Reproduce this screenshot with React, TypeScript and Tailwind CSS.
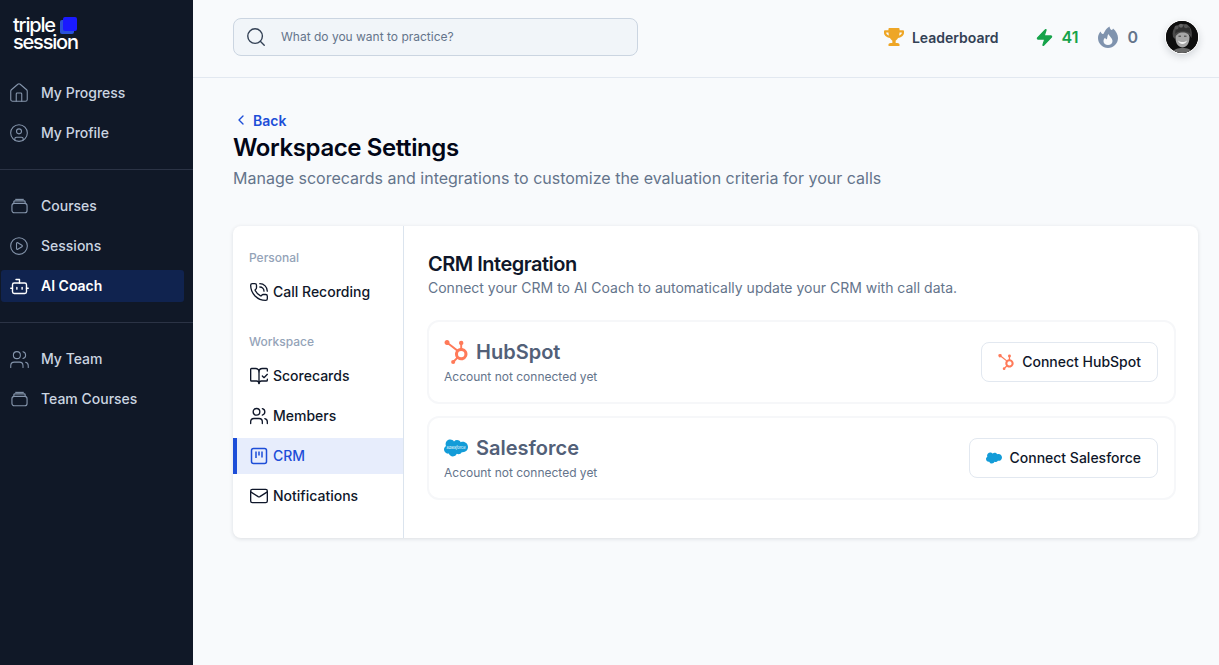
import React from "react";
import { House, CircleUser, CirclePlay, Bot, Users, Search, ChevronLeft, PhoneCall, BookOpenCheck, Mail, Zap } from "lucide-react";
import { SiHubspot, SiSalesforce } from "react-icons/si";
import { FaTrophy } from "react-icons/fa";

function CoursesIcon({ className }: { className?: string }) {
  return (
    <svg viewBox="0 0 18 16" fill="none" stroke="currentColor" strokeWidth="1.2" className={className}>
      <rect x="1" y="5.2" width="16" height="10" rx="2.5" />
      <path d="M3 5V3.4C3 2.6 3.6 2.6 4.2 2.6H13.8C14.4 2.6 15 2.6 15 3.4V5" />
      <path d="M4.5 1H13.5" />
    </svg>
  );
}

function KanbanIcon({ className }: { className?: string }) {
  return (
    <svg viewBox="0 0 18 18" fill="none" stroke="currentColor" strokeWidth="1.5" className={className}>
      <rect x="1.5" y="1.5" width="15" height="15" rx="2" />
      <path d="M6 4.5V11M9 4.5V8.5M12 4.5V10.5" />
    </svg>
  );
}

function FlameIcon({ className }: { className?: string }) {
  return (
    <svg viewBox="0 0 20 22" className={className}>
      <path
        d="M11.5 0.5C12 3.5 13.5 4.5 14.5 3.5C15 3 15 2.5 15 2.5C18 5 20 8.5 20 12C20 17.5 15.5 22 10 22C4.5 22 0 17.5 0 12C0 9.5 1 7.3 2.7 5.6C3 7.2 4 8.2 5 8C6.5 7.6 6 4 11.5 0.5Z"
        fill="#7f93ae"
      />
      <path
        d="M10.5 8C11 10 14.5 12 14.5 15C14.5 17.5 12.5 19 10 19C7.5 19 5.5 17.5 5.5 15.2C5.5 13.5 6.3 12.5 7.2 11.8C7.4 12.8 8 13.4 8.6 13.2C9.6 12.8 9 10 10.5 8Z"
        fill="#f8fafc"
      />
    </svg>
  );
}

function SalesforceLogo({ className, label }: { className?: string; label?: boolean }) {
  return (
    <span className={"relative inline-flex items-center justify-center shrink-0 " + (className ?? "")}>
      <SiSalesforce className="w-full h-full text-[#139cd8]" />
      {label && <span className="absolute text-[4px] leading-none italic text-white tracking-[-0.02em]">salesforce</span>}
    </span>
  );
}

function Avatar() {
  return (
    <div className="w-8 h-8 rounded-full shadow-[0_0_0_1px_#ffffff,0_3px_8px_rgba(15,23,42,0.2)] overflow-hidden bg-[#111111]">
      <svg viewBox="0 0 32 32" className="w-full h-full">
        <rect width="32" height="32" fill="#0e0e0e" />
        <path d="M7 16C5 7 11 3 17 3C24 3 27 9 25.5 17L23.5 14L11 13.5L9 18Z" fill="#4a4a4a" />
        <path d="M9.5 17C9.5 10 23.5 9.5 23.5 16.5C23.5 23 20 26.5 16.5 26.5C13 26.5 9.5 23 9.5 17Z" fill="#a6a6a6" />
        <path d="M9 13C12 9.5 21 9 24.5 13L24 7L16 4.5L10 7Z" fill="#303030" />
        <circle cx="10.5" cy="6.5" r="2" fill="#555" />
        <circle cx="15" cy="4.8" r="2" fill="#666" />
        <circle cx="20" cy="5.2" r="2" fill="#555" />
        <path d="M12 19.5C14.5 21.5 18.5 21.5 21 19.5C20 24 13 24 12 19.5Z" fill="#f2f2f2" />
        <path d="M12.5 15.2H15M18 15.2H20.5" stroke="#333" strokeWidth="0.9" />
        <path d="M5 32C8 28 12 27 16.5 27C21 27 25 28 28 32Z" fill="#6a6a6a" />
      </svg>
    </div>
  );
}

function SideItem({ icon, label, active }: { icon: React.ReactNode; label: string; active?: boolean }) {
  return (
    <div
      className={
        active
          ? "h-8 mt-1 mb-1 ml-[1px] mr-[9px] pl-2 flex items-center gap-3 rounded-[3px] bg-[#10234f] text-white font-semibold"
          : "h-10 ml-[1px] mr-[9px] pl-2 flex items-center gap-3 text-[#cbd5e1] font-medium"
      }
    >
      <span className="w-5 flex justify-center shrink-0">{icon}</span>
      <span className="text-[14px] -mt-[2px]">{label}</span>
    </div>
  );
}

function SubItem({ icon, label, active }: { icon: React.ReactNode; label: string; active?: boolean }) {
  return (
    <div
      className={
        active
          ? "h-9 pl-3 flex items-center gap-[4px] bg-[#e7edfc] border-l-4 border-[#1d4ed8] text-[#1d4ed8]"
          : "h-9 pl-4 flex items-center gap-[4px] text-[#0f172a]"
      }
    >
      {icon}
      <span className="text-[14px] font-medium -mt-[2px]">{label}</span>
    </div>
  );
}

function CrmRow({ logo, small, name, action }: { logo: React.ReactNode; small: React.ReactNode; name: string; action: string }) {
  return (
    <div className="h-[84px] rounded-xl border-2 border-[#f6f7f9] pl-[15px] pr-[16px] flex items-center justify-between">
      <div>
        <div className="flex items-center gap-2 h-7">
          {logo}
          <span className="text-[20px] font-semibold text-[#526078]">{name}</span>
        </div>
        <div className="text-[12px] text-[#64748b] mt-[2px]">Account not connected yet</div>
      </div>
      <button className="h-10 px-4 rounded-lg border border-[#e2e8f0] bg-white flex items-center gap-2 text-[14px] font-medium text-[#0f172a]">
        {small}
        <span className="-mt-[2px]">{action}</span>
      </button>
    </div>
  );
}

export default function App() {
  const sideColor = "text-[#8595ac]";
  const subIcon = "w-5 h-5 shrink-0";
  return (
    <div className="w-[1219px] h-[665px] overflow-hidden flex bg-[#f8fafc] font-['Inter',sans-serif]">
      <aside className="w-[193px] shrink-0 bg-[#101827] flex flex-col">
        <div className="h-[73px] pl-[13px] pt-[17px]">
          <div className="relative w-fit text-white text-[20px] font-medium leading-[17px] tracking-[-0.06em]">
            <div>triple</div>
            <div>session</div>
            <div className="absolute left-[47px] top-[3px] w-[14px] h-[14px] rounded-[2px] bg-[#2a52d8]" />
            <div className="absolute left-[50px] top-0 w-[14px] h-[14px] rounded-[2px] bg-[#1a1aff]" />
          </div>
        </div>
        <SideItem icon={<House className={"w-[22px] h-[22px] shrink-0 " + sideColor} strokeWidth={1.2} />} label="My Progress" />
        <SideItem icon={<CircleUser className={"w-5 h-5 shrink-0 " + sideColor} strokeWidth={1.3} />} label="My Profile" />
        <div className="h-px bg-[#2b3345] mt-4 mb-4" />
        <SideItem icon={<CoursesIcon className={"w-[17px] h-[16px] shrink-0 " + sideColor} />} label="Courses" />
        <SideItem icon={<CirclePlay className={"w-5 h-5 shrink-0 " + sideColor} strokeWidth={1.3} />} label="Sessions" />
        <SideItem icon={<Bot className="w-[21px] h-[21px] text-white shrink-0" strokeWidth={1.6} />} label="AI Coach" active />
        <div className="h-px bg-[#2b3345] mt-4 mb-4" />
        <SideItem icon={<Users className={"w-[21px] h-[21px] shrink-0 " + sideColor} strokeWidth={1.2} />} label="My Team" />
        <SideItem icon={<CoursesIcon className={"w-[17px] h-[16px] shrink-0 " + sideColor} />} label="Team Courses" />
      </aside>

      <div className="flex-1 min-w-0 flex flex-col">
        <header className="h-[78px] shrink-0 border-b border-[#e2e8f0] pl-10 pr-[21px] flex items-center justify-between">
          <div className="w-[405px] h-[38px] rounded-lg bg-[#f1f5f9] border border-[#cbd5e1] flex items-center pl-[11px] -mt-[3px]">
            <Search className="w-[22px] h-[22px] text-[#334155]" strokeWidth={1.5} />
            <span className="ml-[14px] text-[12px] text-[#64748b]">What do you want to practice?</span>
          </div>
          <div className="flex items-center -mt-[3px]">
            <FaTrophy className="w-5 h-[18px] text-[#eea626]" />
            <span className="ml-2 text-[14px] font-semibold text-[#334155]">Leaderboard</span>
            <Zap className="ml-[36px] w-[19px] h-[19px] text-[#16a34a]" fill="#16a34a" strokeWidth={1.5} />
            <span className="ml-2 text-[16px] font-semibold text-[#16a34a]">41</span>
            <FlameIcon className="ml-[20px] w-5 h-[22px]" />
            <span className="ml-[9px] text-[16px] font-semibold text-[#64748b]">0</span>
            <div className="ml-[28px]"><Avatar /></div>
          </div>
        </header>

        <main className="flex-1 pl-10 pr-[21px] pt-[33px]">
          <div className="flex items-center text-[#1d4ed8] h-[18px]">
            <ChevronLeft className="w-4 h-4" strokeWidth={2} />
            <span className="ml-[4px] text-[14px] font-semibold">Back</span>
          </div>
          <h1 className="mt-[3px] text-[24px] leading-8 font-semibold text-[#020617] tracking-[-0.017em]">Workspace Settings</h1>
          <p className="mt-[2px] text-[16px] leading-6 text-[#64748b]">
            Manage scorecards and integrations to customize the evaluation criteria for your calls
          </p>

          <section className="mt-[36px] h-[312px] bg-white rounded-lg shadow-[0_1px_4px_rgba(15,23,42,0.12)] flex overflow-hidden">
            <nav className="w-[171px] shrink-0 border-r border-[#dbe4ee] pt-[24px]">
              <div className="pl-4 text-[12px] leading-4 font-medium text-[#94a3b8]">Personal</div>
              <div className="mt-2">
                <SubItem icon={<PhoneCall className={subIcon} strokeWidth={1.6} />} label="Call Recording" />
              </div>
              <div className="mt-6 pl-4 text-[12px] leading-4 font-medium text-[#94a3b8]">Workspace</div>
              <div className="mt-2 flex flex-col gap-1">
                <SubItem icon={<BookOpenCheck className={subIcon} strokeWidth={1.6} />} label="Scorecards" />
                <SubItem icon={<Users className={subIcon} strokeWidth={1.6} />} label="Members" />
                <SubItem icon={<KanbanIcon className="w-[18px] h-[18px] mx-[1px] shrink-0" />} label="CRM" active />
                <SubItem icon={<Mail className={subIcon} strokeWidth={1.6} />} label="Notifications" />
              </div>
            </nav>
            <div className="flex-1 min-w-0 pl-6 pr-[22px] pt-[24px]">
              <h2 className="text-[20px] leading-7 font-semibold text-[#0f172a] tracking-[-0.025em]">CRM Integration</h2>
              <p className="text-[14px] leading-5 text-[#64748b]">
                Connect your CRM to AI Coach to automatically update your CRM with call data.
              </p>
              <div className="mt-[22px] -ml-px flex flex-col gap-3">
                <CrmRow
                  name="HubSpot"
                  action="Connect HubSpot"
                  logo={<SiHubspot className="w-6 h-6 text-[#ff7a59]" />}
                  small={<SiHubspot className="w-4 h-4 text-[#ff7a59]" />}
                />
                <CrmRow
                  name="Salesforce"
                  action="Connect Salesforce"
                  logo={<SalesforceLogo className="w-6 h-6" label />}
                  small={<SalesforceLogo className="w-4 h-4" />}
                />
              </div>
            </div>
          </section>
        </main>
      </div>
    </div>
  );
}
